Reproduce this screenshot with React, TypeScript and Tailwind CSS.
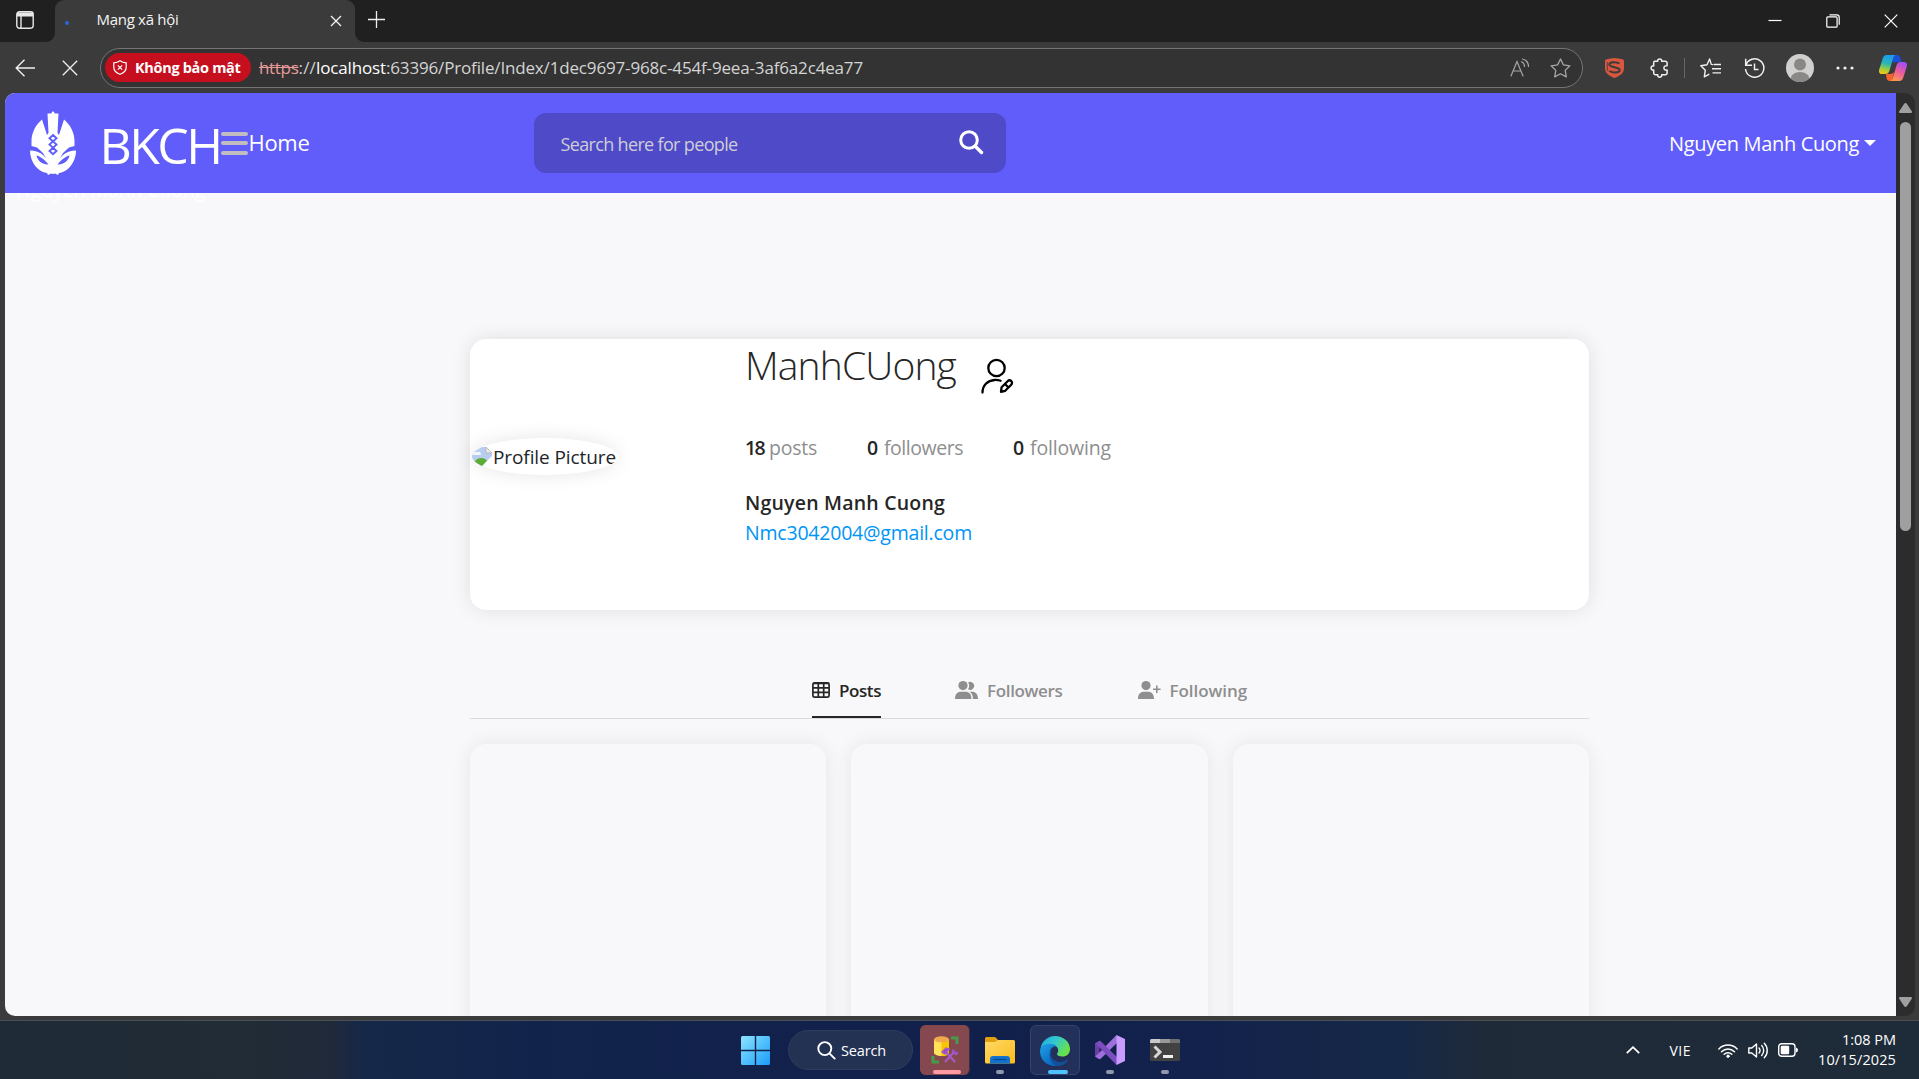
import React, { useLayoutEffect, useRef, useState } from "react";

/* Single line of text whose tracking is adjusted so that it fills `w` pixels. */
function Fit({ w, className = "", children }: { w: number; className?: string; children: React.ReactNode }) {
  const ref = useRef<HTMLSpanElement>(null);
  const [spacing, setSpacing] = useState(0);
  useLayoutEffect(() => {
    const el = ref.current;
    if (!el) return;
    const n = (el.textContent || "").length;
    const natural = el.getBoundingClientRect().width - spacing * n;
    setSpacing((w - natural) / n);
  }, [w]);
  return (
    <span ref={ref} style={{ letterSpacing: spacing }} className={`inline-block shrink-0 whitespace-nowrap ${className}`}>
      {children}
    </span>
  );
}

function Slot({ className = "w-[45px]", children }: { className?: string; children: React.ReactNode }) {
  return <div className={`flex h-full shrink-0 items-center justify-center ${className}`}>{children}</div>;
}

function TabStrip() {
  return (
    <div className="flex h-[42px] shrink-0 bg-[#3b3b3b]">
      <div className="flex w-[55px] items-center rounded-br-[9px] bg-[#202020] pl-4">
        <svg width="18" height="18" viewBox="0 0 18 18" className="-mt-0.5" fill="none" stroke="#e8e8e8" strokeWidth="1.4">
          <rect x="0.8" y="0.8" width="16.4" height="16.4" rx="2.6" />
          <path d="M1 1.5h16v4H1z" fill="#e8e8e8" stroke="none" />
          <path d="M5 5v12" />
        </svg>
      </div>
      <div className="w-[300px] bg-gradient-to-b from-[#202020] from-50% to-[#3b3b3b] to-50%">
        <div className="flex h-full items-center rounded-t-[9px] bg-[#3b3b3b]">
          <div className="ml-[10px] mt-1 size-[3.5px] rounded-full bg-[#2a66d8]" />
          <Fit w={82} className="-mt-[4px] ml-[28px] text-[15px] leading-5 text-[#f4f4f4]">Mạng xã hội</Fit>
          <svg width="12" height="12" viewBox="0 0 12 12" className="ml-[151px] -mt-px" stroke="#efefef" strokeWidth="1.4">
            <path d="M1 1l10 10M11 1L1 11" />
          </svg>
        </div>
      </div>
      <div className="flex flex-1 items-center rounded-bl-[9px] bg-[#202020]">
        <svg width="19" height="19" viewBox="0 0 19 19" className="ml-[12px] -mt-[3px]" stroke="#efefef" strokeWidth="1.3">
          <path d="M9.5 1v17M1 9.5h17" />
        </svg>
        <div className="ml-auto mr-[21px] flex items-center">
          <svg width="14" height="14" viewBox="0 0 14 14" stroke="#fff" strokeWidth="1.2" className="mr-[44px]"><path d="M0.5 6.5h13" /></svg>
          <svg width="14" height="14" viewBox="0 0 14 14" fill="none" stroke="#fff" strokeWidth="1.2" className="mr-[44px]">
            <rect x="0.8" y="2.9" width="10.3" height="10.3" rx="1" />
            <path d="M3.5 0.8h7.3a2.4 2.4 0 0 1 2.4 2.4v7.6" />
          </svg>
          <svg width="14" height="14" viewBox="0 0 14 14" stroke="#fff" strokeWidth="1.2"><path d="M0.7 0.7l12.6 12.6M13.3 0.7L0.7 13.3" /></svg>
        </div>
      </div>
    </div>
  );
}

function Toolbar() {
  return (
    <div className="flex h-[51px] shrink-0 items-center">
      <svg width="20" height="18" viewBox="0 0 20 18" className="ml-[15px]" fill="none" stroke="#f0f0f0" strokeWidth="1.4">
        <path d="M9.5 0.8L1.2 9l8.3 8.2M1.2 9H20" />
      </svg>
      <svg width="16" height="16" viewBox="0 0 16 16" className="ml-[27px]" stroke="#f0f0f0" strokeWidth="1.3">
        <path d="M0.8 0.8l14.4 14.4M15.2 0.8L0.8 15.2" />
      </svg>
      <div className="ml-[22px] flex h-10 w-[1483px] items-center rounded-full border border-[#757575] bg-[#333333]">
        <div className="ml-1 flex h-[29px] w-[146px] items-center rounded-full bg-[#c50f1f]">
          <svg width="14" height="15" viewBox="0 0 14 15" className="ml-2" fill="none" stroke="#fff" strokeWidth="1.2">
            <path d="M7 0.8c2 1.5 4 2 6.2 2.1v4.4c0 3.4-2.2 5.6-6.2 7-4-1.4-6.2-3.6-6.2-7V2.900C3 2.800 5 2.300 7 0.800z" />
            <path d="M4.800 5.300l4.400 4.400M9.200 5.300L4.800 9.700" />
          </svg>
          <Fit w={105.500} className="ml-2 text-[14.500px] font-bold leading-5 text-white">Không bảo mật</Fit>
        </div>
        <div className="ml-[8px] flex text-[17px] leading-6 text-[#cfcfcf]">
          <Fit w={39.500} className="text-[#e89a9a] line-through">https</Fit>
          <Fit w={17.500}>://</Fit>
          <Fit w={70} className="text-white">localhost</Fit>
          <Fit w={477} className="text-[#d4d4d4]">:63396/Profile/Index/1dec9697-968c-454f-9eea-3af6a2c4ea77</Fit>
        </div>
        <div className="ml-auto mr-[11px] flex items-center gap-[20px]">
          <svg width="20" height="20" viewBox="0 0 20 20" fill="none" stroke="#a6a6a6" strokeWidth="1.200" strokeLinecap="round">
            <path d="M1 18L7 3.500L13 18M3 13h8" />
            <path d="M11.500 3.800a5 5 0 0 1 3 4.700M12.500 1a8 8 0 0 1 6 7.500" />
          </svg>
          <svg width="21" height="20" viewBox="0 0 21 20" fill="none" stroke="#a6a6a6" strokeWidth="1.300" strokeLinejoin="round">
            <path d="M10.500 1l2.900 5.900 6.500.9-4.700 4.600 1.100 6.500-5.800-3.100-5.800 3.100 1.100-6.500L1.100 7.800l6.500-.9z" />
          </svg>
        </div>
      </div>
      <Slot className="ml-[9px] w-[45px]">
        <svg width="19" height="20" viewBox="0 0 19 20">
          <path d="M9.500 0C12 .2 15.500.6 18 1.500c.8.300 1 1 1 2v7c0 4.500-4 7.500-9.500 9.500C4 18 0 15 0 10.500v-7c0-1 .2-1.700 1-2C3.500.6 7 .2 9.500 0z" fill="#d9573f" />
          <path d="M14.500 5.500C12 3.700 4.300 3.400 4.300 6.600c0 3.200 10.400 2 10.400 5.400 0 3.200-7.200 3.200-10.200 1" fill="none" stroke="#3b3b3b" strokeWidth="2" />
          <path d="M2.300 4v6.500c0 1 .3 2 .8 2.800M16.700 4" fill="none" stroke="#3b3b3b" strokeWidth="0.800" />
        </svg>
      </Slot>
      <Slot>
        <svg width="20" height="20" viewBox="0 0 20 20" fill="none" stroke="#f0f0f0" strokeWidth="1.500" strokeLinejoin="round">
          <path d="M4.500 3.300h3.200c-.3-1.500.8-2.400 2-2.400s2.300.9 2 2.400h3.600a1.800 1.800 0 0 1 1.800 1.800v2.700c-2.200-.3-3.200.8-3.200 2.100s1 2.400 3.200 2.100V15a1.800 1.800 0 0 1-1.800 1.800h-3.600c.3 1.500-.8 2.400-2 2.400s-2.300-.9-2-2.400H5.500A1.800 1.800 0 0 1 3.700 15v-2.900c-1.700.3-2.600-.8-2.600-2.100s.9-2.400 2.600-2.100V5.100c0-1 .3-1.800.8-1.800z" />
        </svg>
      </Slot>
      <div className="ml-[2px] h-5 w-px bg-[#666]" />
      <Slot className="ml-[3px] w-[45px]">
        <svg width="21" height="20" viewBox="0 0 21 20" fill="none" stroke="#f0f0f0" strokeWidth="1.400" strokeLinejoin="round">
          <path d="M13.500 6.600l-2.200-.2L9.600 1 7 6.800.8 7.700l4.500 4.500-1 6.600 5-2.700M14 6.500h7M12 10.700h9M12.500 14.900H21" />
        </svg>
      </Slot>
      <Slot className="-ml-px w-[45px]">
        <svg width="21" height="20" viewBox="0 0 21 20" fill="none" stroke="#f0f0f0" strokeWidth="1.500">
          <path d="M1.800 7.500A9.200 9.200 0 1 1 1.500 11M1.700 0.800v6.500h6.300M10.500 5.500v6h4" />
        </svg>
      </Slot>
      <Slot>
        <svg width="28" height="28" viewBox="0 0 28 28">
          <defs><clipPath id="av"><circle cx="14" cy="14" r="14" /></clipPath></defs>
          <g clipPath="url(#av)">
            <rect width="28" height="28" fill="#d2d0ce" />
            <circle cx="14" cy="10.500" r="6" fill="#8a8886" />
            <ellipse cx="14" cy="25" rx="9.500" ry="7" fill="#8a8886" />
          </g>
        </svg>
      </Slot>
      <Slot>
        <svg width="18" height="4" viewBox="0 0 18 4" fill="#f0f0f0"><circle cx="2" cy="2" r="1.600" /><circle cx="9" cy="2" r="1.600" /><circle cx="16" cy="2" r="1.600" /></svg>
      </Slot>
      <Slot className="w-[51px]">
        <svg width="28" height="26" viewBox="0 0 28 26">
          <defs>
            <linearGradient id="cpA" x1="0.500" y1="0" x2="0.300" y2="1"><stop offset="0" stopColor="#1b9bf0" /><stop offset="0.450" stopColor="#2bb5b5" /><stop offset="0.750" stopColor="#9fce3b" /><stop offset="1" stopColor="#f5c518" /></linearGradient>
            <linearGradient id="cpB" x1="0.700" y1="0" x2="0.300" y2="1"><stop offset="0" stopColor="#a04df5" /><stop offset="0.500" stopColor="#ee5b9b" /><stop offset="1" stopColor="#fb9a4d" /></linearGradient>
          </defs>
          <path d="M13 0h5.500c1.500 0 2.300 1 2.800 2.500L22.800 7H17l-3 1z" fill="#1a4fd6" />
          <path d="M7 19h5l3-1.500L13 26h-2.500C9 26 8 25 7.600 23.500z" fill="#f4622e" />
          <path d="M7.500 0H17c-1.500.3-2.300 1.300-2.800 3L10.500 15.500C9.700 18 8.600 19 6.500 19H3c-2.500 0-3.500-2-2.800-4.500L3.700 3.500C4.400 1.200 5.500 0 7.500 0z" fill="url(#cpA)" />
          <path d="M20.500 26H11c1.500-.3 2.300-1.300 2.800-3l3.700-12.500C18.300 8 19.400 7 21.500 7H25c2.500 0 3.500 2 2.800 4.500l-3.500 11c-.7 2.300-1.800 3.500-3.800 3.500z" fill="url(#cpB)" />
        </svg>
      </Slot>
    </div>
  );
}

function Logo() {
  return (
    <svg width="46" height="64" viewBox="0 0 46 64" fill="#fff">
      <path d="M23 0l2 2.500h3.500L27.500 22 29 24 34 8.500C40.500 14 44.500 22 44.500 30v5L39 36.500 33 42l-5 9H18l-5-9-6-5.500-5.500-1.500V30C1.500 22 5.500 14 12 8.500L17 24l1.500-2L17.500 2.500H21z" />
      <path d="M0 39.500c5 0 10 1.500 13.500 5 3 3 5 5.500 6.500 7V45h6v6.500c1.500-1.500 3.500-4 6.500-7 3.500-3.500 8.500-5 13.500-5C46 51 38 61 29 62l-1 2-3-1.500-2 .5-2-.5-3 1.500-1-2C8 61 0 51 0 39.500z" />
      <path d="M6.500 44.500C10 45 15 49 18.500 53.500 13 54 7.500 50 6.500 44.500zM39.500 44.500C36 45 31 49 27.500 53.500 33 54 38.500 50 39.500 44.500z" fill="#615dfa" />
      <g fill="none" stroke="#615dfa" strokeWidth="1.900">
        <path d="M23 24l3.500 3.200L23 30.400l-3.500-3.200zM23 30.400l3.500 3.200-3.500 3.200-3.500-3.200zM23 36.800l3.500 3.200-3.500 3.200-3.500-3.200z" />
      </g>
    </svg>
  );
}

function Navbar() {
  return (
    <div className="relative z-10 flex h-[100px] shrink-0 items-center bg-[#615dfa] text-white">
      <div className="ml-[25px]"><Logo /></div>
      <Fit w={121} className="ml-[23.500px] mt-[3px] text-[50px] leading-[60px]">BKCH</Fit>
      <div className="flex w-[27px] flex-col gap-[5.500px]">
        <div className="h-1 rounded-full bg-[#c0bcc0]" />
        <div className="h-1 rounded-full bg-[#c0bcc0]" />
        <div className="h-1 rounded-full bg-[#c0bcc0]" />
      </div>
      <Fit w={61} className="-mt-[2px] ml-px text-[22px] leading-8">Home</Fit>
      <div className="ml-[224px] flex h-[60px] w-[472px] items-center rounded-xl bg-[#4e4ac8]">
        <Fit w={177} className="ml-[27px] mt-[2px] text-[18px] leading-7 text-[#cfcdd6]">Search here for people</Fit>
        <svg width="25" height="25" viewBox="0 0 25 25" className="-mt-[2px] ml-auto mr-[22px]" fill="none" stroke="#fff" strokeLinecap="round">
          <circle cx="10" cy="10" r="8.300" strokeWidth="3" />
          <path d="M16.500 16.500l6 6" strokeWidth="3.400" />
        </svg>
      </div>
      <Fit w={190} className="ml-auto mt-[2px] text-[20px] leading-8">Nguyen Manh Cuong</Fit>
      <svg width="12" height="6" viewBox="0 0 12 6" className="ml-[5px] mr-[20px]" fill="#fff"><path d="M0 0h12L6 6z" /></svg>
    </div>
  );
}

function EditUserIcon() {
  return (
    <svg width="33" height="36" viewBox="0 0 33 36" fill="none" stroke="#000" strokeWidth="2.300" strokeLinecap="round">
      <circle cx="15.500" cy="10" r="8.200" />
      <path d="M1.500 34.500c0-7 5-12 12-12.500 2-.1 4 0 6 .8" />
      <path d="M20 33.800l.6-4.600 6-6c1.200-1.200 2.800-1 3.700-.1s1.100 2.500-.1 3.700l-6 6z M24.500 26.500l3 3" strokeWidth="2.300" strokeLinejoin="round" />
    </svg>
  );
}

function BrokenImage() {
  return (
    <svg width="20" height="20" viewBox="0 0 20 20">
      <path d="M0 0h14l6 6v14H0z" fill="#b9cdf0" />
      <path d="M14 0v6h6z" fill="#eee" stroke="#aaa" strokeWidth="0.700" />
      <path d="M0 20c0-4 5-9 9-9 3 0 5 1 6 3l-5 6z" fill="#5cab34" />
      <path d="M20 9L9 20h11z" fill="#fff" />
      <path d="M1 6c2-2 4 0 5-1 2-1 3 1 3 3H1z" fill="#f4f7fd" />
    </svg>
  );
}

function Stat({ n, nw, label, w }: { n: string; nw: number; label: string; w: number }) {
  return (
    <div className="flex">
      <Fit w={nw} className="font-semibold text-[#262626]">{n}</Fit>
      <Fit w={w} className="ml-[5px] text-[#8e8e8e]">{label}</Fit>
    </div>
  );
}

function ProfileCard() {
  return (
    <div className="flex h-[271px] shrink-0 items-center rounded-[16px] bg-white shadow-[0_0_20px_rgba(0,0,0,0.1)]">
      <div className="ml-[2px] mt-[-36px] flex h-[37px] w-[146px] items-center overflow-hidden rounded-[50%] bg-white [box-shadow:0_0_19px_rgba(0,0,0,0.1)]">
        <BrokenImage />
        <Fit w={123} className="ml-[1px] text-[19px] leading-7 text-[#212529]">Profile Picture</Fit>
      </div>
      <div className="ml-[127px] flex h-full flex-col text-[19.500px] leading-[30px]">
        <div className="flex h-[94px]">
          <Fit w={211} className="mt-[2px] text-[39px] font-light leading-[48px] text-[#262626]">ManhCUong</Fit>
          <div className="ml-[25px] mt-[19px]"><EditUserIcon /></div>
        </div>
        <div className="flex">
          <Stat n="18" nw={19} label="posts" w={48} />
          <div className="w-[50px]" />
          <Stat n="0" nw={12} label="followers" w={79} />
          <div className="w-[50px]" />
          <Stat n="0" nw={12} label="following" w={81} />
        </div>
        <Fit w={200} className="mt-[25px] self-start font-semibold text-[#262626]">Nguyen Manh Cuong</Fit>
        <Fit w={227} className="self-start text-[#0095f6]">Nmc3042004@gmail.com</Fit>
      </div>
    </div>
  );
}

function Tabs() {
  return (
    <div className="mt-[67px] flex h-[42px] shrink-0 justify-start border-b border-[#dbdbdb] pl-[342px] text-[17px] font-semibold leading-[28px]">
      <div className="flex w-[69px] border-b-2 border-[#262626] text-[#262626]">
        <svg width="18" height="16" viewBox="0 0 18 16" className="mt-[5px]" fill="none" stroke="#262626" strokeWidth="1.700">
          <rect x="0.900" y="0.900" width="16.200" height="14.200" rx="1.500" />
          <path d="M1 1.500h16M1 5.800h16M1 10.400h16M6.300 1v14M11.700 1v14" />
        </svg>
        <Fit w={42} className="ml-[9px]">Posts</Fit>
      </div>
      <div className="ml-[74px] flex text-[#8e8e8e]">
        <svg width="23" height="18" viewBox="0 0 23 18" className="mt-[4px]" fill="#8e8e8e">
          <circle cx="8" cy="4.600" r="4.600" />
          <path d="M13 1.400a4 4 0 1 1 0 6.800c1.600-2 1.600-4.800 0-6.800z" />
          <path d="M0 18c0-5 2.500-7.300 6-7.300h4.500c3.500 0 6 2.300 6 7.300zM14.500 10.700h2.500c3.500 0 6 2.300 6 7.300h-5c0-3.500-1-5.800-3.500-7.300z" />
        </svg>
        <Fit w={75.500} className="ml-[9px]">Followers</Fit>
      </div>
      <div className="ml-[75px] flex text-[#8e8e8e]">
        <svg width="23" height="18" viewBox="0 0 23 18" className="mt-[4px]" fill="#8e8e8e">
          <circle cx="8" cy="4.600" r="4.600" />
          <path d="M0 18c0-5 2.500-7.300 6-7.300h4c3.500 0 6 2.300 6 7.300zM18 4.500h1.600v3h3v1.600h-3v3H18v-3h-3V7.500h3z" />
        </svg>
        <Fit w={77.500} className="ml-[9px]">Following</Fit>
      </div>
    </div>
  );
}

function Page() {
  return (
    <div className="flex w-[1891px] flex-col overflow-hidden bg-[#f8f8fb]">
      <Navbar />
      <div className="flex h-[146px] shrink-0 items-start">
        <Fit w={189} className="-mt-[15px] ml-[11px] text-[20px] leading-6 text-white">Nguyen Manh Cuong</Fit>
      </div>
      <div className="ml-[465px] flex w-[1119px] flex-col">
        <ProfileCard />
        <Tabs />
        <div className="mt-[25px] grid grid-cols-3 gap-[25px]">
          <div className="h-[356px] rounded-[16px] shadow-[0_0_20px_rgba(0,0,0,0.08)]" />
          <div className="h-[356px] rounded-[16px] shadow-[0_0_20px_rgba(0,0,0,0.08)]" />
          <div className="h-[356px] rounded-[16px] shadow-[0_0_20px_rgba(0,0,0,0.08)]" />
        </div>
      </div>
    </div>
  );
}

function Scrollbar() {
  return (
    <div className="flex w-[19px] flex-col items-center bg-[#2c2c2c] pt-[10px]">
      <svg width="13" height="10" viewBox="0 0 13 10" fill="#9f9f9f"><path d="M6.500 0c.6 0 1 .3 1.300.8l5 7.500c.5.800 0 1.700-1 1.700H1.200c-1 0-1.500-.9-1-1.700l5-7.500C5.500.3 5.900 0 6.500 0z" /></svg>
      <div className="mt-[9px] h-[409px] w-[11px] rounded-full bg-[#9f9f9f]" />
      <svg width="13" height="10" viewBox="0 0 13 10" className="mb-[9px] mt-auto" fill="#9f9f9f"><path d="M6.500 10c.6 0 1-.3 1.300-.8l5-7.500c.5-.8 0-1.700-1-1.700H1.200c-1 0-1.500.9-1 1.700l5 7.500c.3.500.7.800 1.300.8z" /></svg>
    </div>
  );
}

function TaskButton({ dot, className = "", children }: { dot: string; className?: string; children: React.ReactNode }) {
  return (
    <div className={`flex h-[50px] w-[50px] flex-col items-center ${className}`}>
      <div className="flex h-[45px] items-center pt-[5px]">{children}</div>
      <div className={`h-1 shrink-0 rounded-full ${dot}`} />
    </div>
  );
}

function Taskbar() {
  return (
    <div className="flex h-[58px] shrink-0 items-center bg-[linear-gradient(90deg,#1e2b37_0px,#222c36_250px,#20293a_330px,#152848_365px,#12234c_560px,#11204b_1000px,#13224c_1200px,#162847_1400px,#1f2a38_1490px,#1e2b38_1919px)] text-[14.500px] text-white">
      <svg width="29" height="29" viewBox="0 0 29 29" className="ml-[741px]">
        <defs><linearGradient id="win" x1="0" y1="0" x2="29" y2="29" gradientUnits="userSpaceOnUse"><stop offset="0" stopColor="#8ce4fd" /><stop offset="1" stopColor="#1a9cfa" /></linearGradient></defs>
        <path d="M0 1.500Q0 0 1.500 0h12.300v13.800H0zM15.200 0h12.300Q29 0 29 1.500v12.300H15.200zM0 15.200h13.800V29H1.500Q0 29 0 27.500zM15.200 15.200H29v12.300q0 1.500-1.500 1.500H15.200z" fill="url(#win)" />
      </svg>
      <div className="ml-[18px] flex h-10 w-[125px] items-center rounded-full border border-[#2d3c5c] bg-[#233253]">
        <svg width="19" height="19" viewBox="0 0 19 19" className="ml-[28px]" fill="none" stroke="#fff" strokeWidth="1.900" strokeLinecap="round">
          <circle cx="7.800" cy="7.600" r="6.500" /><path d="M12.700 12.600l5 5" />
        </svg>
        <Fit w={45} className="ml-[5px] mt-[2px] leading-5">Search</Fit>
      </div>
      <div className="ml-[7px] flex h-[50px] w-[50px] rounded-[6px] bg-[#7c4650]">
        <TaskButton dot="w-7 bg-[#ff99a4]" className="w-[45px] rounded-[6px] border-r border-[#3a2c42] bg-[#84484e] pl-[5px]">
          <svg width="28" height="28" viewBox="0 0 28 28" className="-ml-1">
            <path d="M3 3v14c0 1.500 3.500 3 7.500 3s7.500-1.500 7.500-3V3z" fill="#ffe15a" />
            <path d="M10.500 3H18v14c0 1.500-3.500 3-7.500 3z" fill="#f8c500" />
            <ellipse cx="10.500" cy="3.300" rx="7.500" ry="3" fill="#efa94f" />
            <path d="M20 0.500h7.500V8h-3V3.500H20zM.5 20h3v4.500H8v3H.5z" fill="#479b48" />
            <path d="M14 26l10-11M24 26L15 16" stroke="#a55ac8" strokeWidth="2.200" />
            <path d="M11 16l4-4 3 1-4 5zM22 13.500v3l3 2 2-2" fill="#8f4bc0" stroke="#a55ac8" strokeWidth="1.500" />
          </svg>
        </TaskButton>
      </div>
      <TaskButton dot="w-2 bg-[#8f98ac]" className="ml-[5px]">
        <svg width="30" height="27" viewBox="0 0 30 27" className="mt-px">
          <defs><linearGradient id="fold" x1="0" y1="0" x2="1" y2="1"><stop offset="0" stopColor="#ffd968" /><stop offset="1" stopColor="#fbbc1a" /></linearGradient></defs>
          <path d="M0 1.500Q0 0 1.500 0H9q1.500 0 2.500 1.300L13 3h15v6H0z" fill="#e0a010" />
          <path d="M0 5h10l3-2h15.500Q30 3 30 4.500V25q0 1.500-1.500 1.500h-27Q0 26.500 0 25z" fill="url(#fold)" />
          <path d="M5 26.500V22q0-3 3-3h14q3 0 3 3v4.500z" fill="#1273cf" />
          <path d="M9 22.500h12" stroke="#0a4b92" strokeWidth="1.400" strokeLinecap="round" />
        </svg>
      </TaskButton>
      <div className="ml-[5px] flex w-[50px] rounded-[6px] bg-[#1a2850]">
        <TaskButton dot="w-5 bg-[#4cc2ff]" className="w-[45px] rounded-[6px] border border-[#33436a] bg-[#22305a] pl-[5px]">
          <svg width="30" height="30" viewBox="0 0 30 30" className="-ml-[5px]">
            <defs>
              <linearGradient id="edA" x1="0" y1="0" x2="1" y2="0.500"><stop offset="0" stopColor="#22a6e8" /><stop offset="0.500" stopColor="#33c8d0" /><stop offset="1" stopColor="#67e348" /></linearGradient>
              <linearGradient id="edB" x1="0" y1="0" x2="0.700" y2="1"><stop offset="0" stopColor="#1da1e6" /><stop offset="1" stopColor="#0a62bd" /></linearGradient>
            </defs>
            <path d="M0.500 13C1.500 5.500 7.500 0 15 0c8 0 15 5.500 15 13 0 5-3.500 7.500-7.500 7.500-3.500 0-5.500-1.300-5.500-2.500 0-.8 1.200-1.500 1.200-3.800 0-3.400-3.400-5.500-7.200-5.500C6.500 8.700 2.500 10 .5 13z" fill="url(#edA)" />
            <path d="M0 15c0-4 4-7.200 9.500-7.200 3.500 0 6 1.200 7.500 3-4-1-7 2-7 6.200 0 6 4.500 11 9.500 12.300-1.400.5-3 .7-4.500.7C6.500 30 0 23.500 0 15z" fill="url(#edB)" />
            <path d="M12.500 13.500C10 16 10 23 17 25.500c4 1.300 7.800 0 10.300-1.700.5-.3 1 .1.700.6C25.500 28 21.500 30 17.500 30 12 28.500 9.500 23 9.500 19c0-2.500 1-4.500 3-5.500z" fill="#12509c" />
          </svg>
        </TaskButton>
      </div>
      <TaskButton dot="w-2 bg-[#8f98ac]" className="ml-[5px]">
        <svg width="30" height="30" viewBox="0 0 30 30">
          <path d="M0 8.500L4.500 6v18L0 21.500z" fill="#6a3fa5" />
          <path d="M0 21.500L3 19 21.500 0 24 6 6 23.500q-1 1-2 .5z" fill="#9d6fdb" />
          <path d="M0 8.500l3 2.500 18.500 19L24 24 6 6.500q-1-1-2-.5z" fill="#7b4ec0" />
          <path d="M21.500 0L30 4v22l-8.500 4z" fill="#c79bff" />
        </svg>
      </TaskButton>
      <TaskButton dot="w-2 bg-[#8f98ac]" className="ml-[5px]">
        <svg width="30" height="22" viewBox="0 0 30 22">
          <rect width="30" height="22" rx="1.500" fill="#424242" />
          <path d="M0 4V1.500Q0 0 1.500 0H10v4z" fill="#c9c9c9" /><path d="M10 0h10v4H10z" fill="#999" /><path d="M20 0h8.500Q30 0 30 1.500V4H20z" fill="#707070" />
          <path d="M4.500 7.500l5.500 5.500-5.500 5.500" fill="none" stroke="#d6d6d6" strokeWidth="3" />
          <path d="M13 17.500h10" stroke="#f0f0f0" strokeWidth="3" />
        </svg>
      </TaskButton>
      <svg width="14" height="8" viewBox="0 0 14 8" className="ml-auto" fill="none" stroke="#fff" strokeWidth="1.800"><path d="M0.800 7.200L7 1.200l6.200 6" /></svg>
      <Fit w={21.500} className="ml-[30px] mt-px text-[14px] leading-5">VIE</Fit>
      <svg width="20" height="15" viewBox="0 0 20 15" className="ml-[27px]" fill="none" stroke="#fff" strokeWidth="1.500" strokeLinecap="round">
        <path d="M0.900 6a12.500 12.500 0 0 1 18.200 0M3.500 8.800a9 9 0 0 1 13 0M6.200 11.300a5.400 5.400 0 0 1 7.600 0" /><circle cx="10" cy="13.200" r="1.200" fill="#fff" strokeWidth="1" />
      </svg>
      <svg width="20" height="17" viewBox="0 0 20 17" className="ml-[10px]" fill="none" stroke="#fff" strokeWidth="1.400" strokeLinecap="round" strokeLinejoin="round">
        <path d="M.8 6v5h3l4.700 4V2L3.800 6zM11 6a3.500 3.500 0 0 1 0 5M13.700 3.600a7 7 0 0 1 0 9.800M16.300 1.300a10.300 10.300 0 0 1 0 14.400" />
      </svg>
      <svg width="20" height="14" viewBox="0 0 20 14" className="ml-[10px]">
        <rect x="0.700" y="0.700" width="16.300" height="12.600" rx="3" fill="none" stroke="#fff" strokeWidth="1.400" />
        <rect x="2.700" y="2.700" width="8.500" height="8.600" rx="1.200" fill="#fff" /><path d="M18 4.500q2 .5 2 2.500t-2 2.500z" fill="#fff" />
      </svg>
      <div className="-mt-px ml-[20px] mr-[23px] flex flex-col items-end leading-5">
        <Fit w={54}>1:08 PM</Fit>
        <Fit w={78}>10/15/2025</Fit>
      </div>
    </div>
  );
}

export default function App() {
  return (
    <div className="flex h-[1079px] w-[1919px] flex-col overflow-hidden bg-[#3b3b3b] font-['Open_Sans','Noto_Sans',sans-serif]">
      <TabStrip />
      <Toolbar />
      <div className="ml-[5px] flex h-[923px] w-[1910px] shrink-0 overflow-hidden rounded-[10px]">
        <Page />
        <Scrollbar />
      </div>
      <div className="h-[5px] shrink-0 border-b border-[#4a4f55]" />
      <Taskbar />
    </div>
  );
}
